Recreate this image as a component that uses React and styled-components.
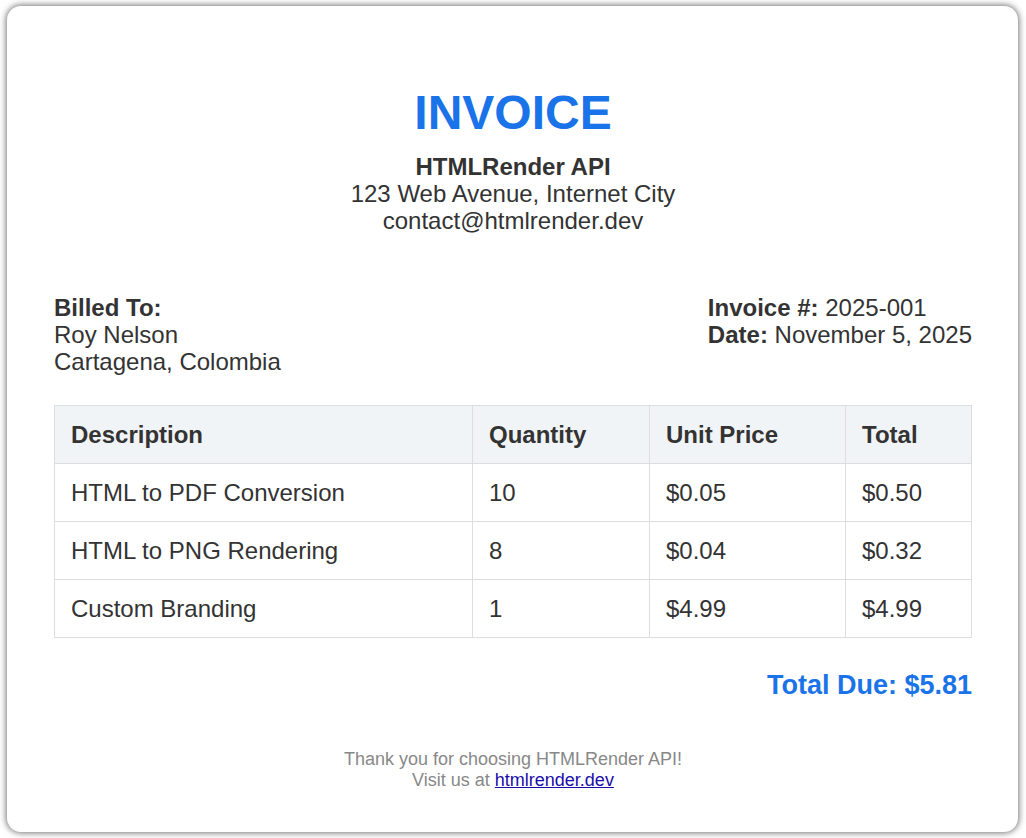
import React from "react";
import styled, { createGlobalStyle } from "styled-components";

const Global = createGlobalStyle`
  html, body { margin: 0; background: #fff; }
  body { font-family: "Liberation Sans", Arial, sans-serif; color: #333; }
`;

const Page = styled.div`
  padding: 6px 8px 6px 7px;
  height: 838px;
  box-sizing: border-box;
`;

const Card = styled.div`
  height: 100%;
  box-sizing: border-box;
  background: #fff;
  border-radius: 14px;
  box-shadow: 0 0 6px 1px rgba(0, 0, 0, 0.55);
  padding: 79px 46px 0 47px;
`;

const Header = styled.div`
  text-align: center;
  font-size: 24px;
  line-height: 27px;
`;

const Title = styled.h1`
  margin: 0 0 12px;
  font-size: 48px;
  line-height: 56px;
  color: #1a73e8;
`;

const Bold = styled.div`
  font-weight: bold;
`;

const Info = styled.div`
  display: flex;
  justify-content: space-between;
  margin-top: 60px;
  font-size: 24px;
  line-height: 27px;
`;

const Table = styled.table`
  width: 100%;
  table-layout: fixed;
  border-collapse: collapse;
  margin-top: 30px;
  font-size: 24px;
  th, td {
    border: 1px solid #ddd;
    padding: 0 16px;
    height: 57px;
    text-align: left;
  }
  th { background: #f1f4f6; }
`;

const Col = styled.col`
  width: ${(p) => p.w}px;
`;

const Total = styled.div`
  text-align: right;
  margin-top: 32px;
  font-size: 27px;
  font-weight: bold;
  color: #1a73e8;
`;

const Footer = styled.div`
  margin-top: 48px;
  text-align: center;
  font-size: 18px;
  line-height: 21px;
  color: #888;
  a { color: #1a0dab; }
`;

const rows = [
  ["HTML to PDF Conversion", "10", "$0.05", "$0.50"],
  ["HTML to PNG Rendering", "8", "$0.04", "$0.32"],
  ["Custom Branding", "1", "$4.99", "$4.99"],
];

export default function App() {
  return (
    <Page>
      <Global />
      <Card>
        <Header>
          <Title>INVOICE</Title>
          <Bold>HTMLRender API</Bold>
          <div>123 Web Avenue, Internet City</div>
          <div>contact@htmlrender.dev</div>
        </Header>
        <Info>
          <div>
            <Bold>Billed To:</Bold>
            <div>Roy Nelson</div>
            <div>Cartagena, Colombia</div>
          </div>
          <div>
            <div><b>Invoice #:</b> 2025-001</div>
            <div><b>Date:</b> November 5, 2025</div>
          </div>
        </Info>
        <Table>
          <colgroup>
            <Col w={418} />
            <Col w={177} />
            <Col w={196} />
            <Col w={126} />
          </colgroup>
          <thead>
            <tr>
              <th>Description</th>
              <th>Quantity</th>
              <th>Unit Price</th>
              <th>Total</th>
            </tr>
          </thead>
          <tbody>
            {rows.map((r) => (
              <tr key={r[0]}>
                {r.map((c, i) => <td key={i}>{c}</td>)}
              </tr>
            ))}
          </tbody>
        </Table>
        <Total>Total Due: $5.81</Total>
        <Footer>
          <div>Thank you for choosing HTMLRender API!</div>
          <div>Visit us at <a href="#">htmlrender.dev</a></div>
        </Footer>
      </Card>
    </Page>
  );
}
